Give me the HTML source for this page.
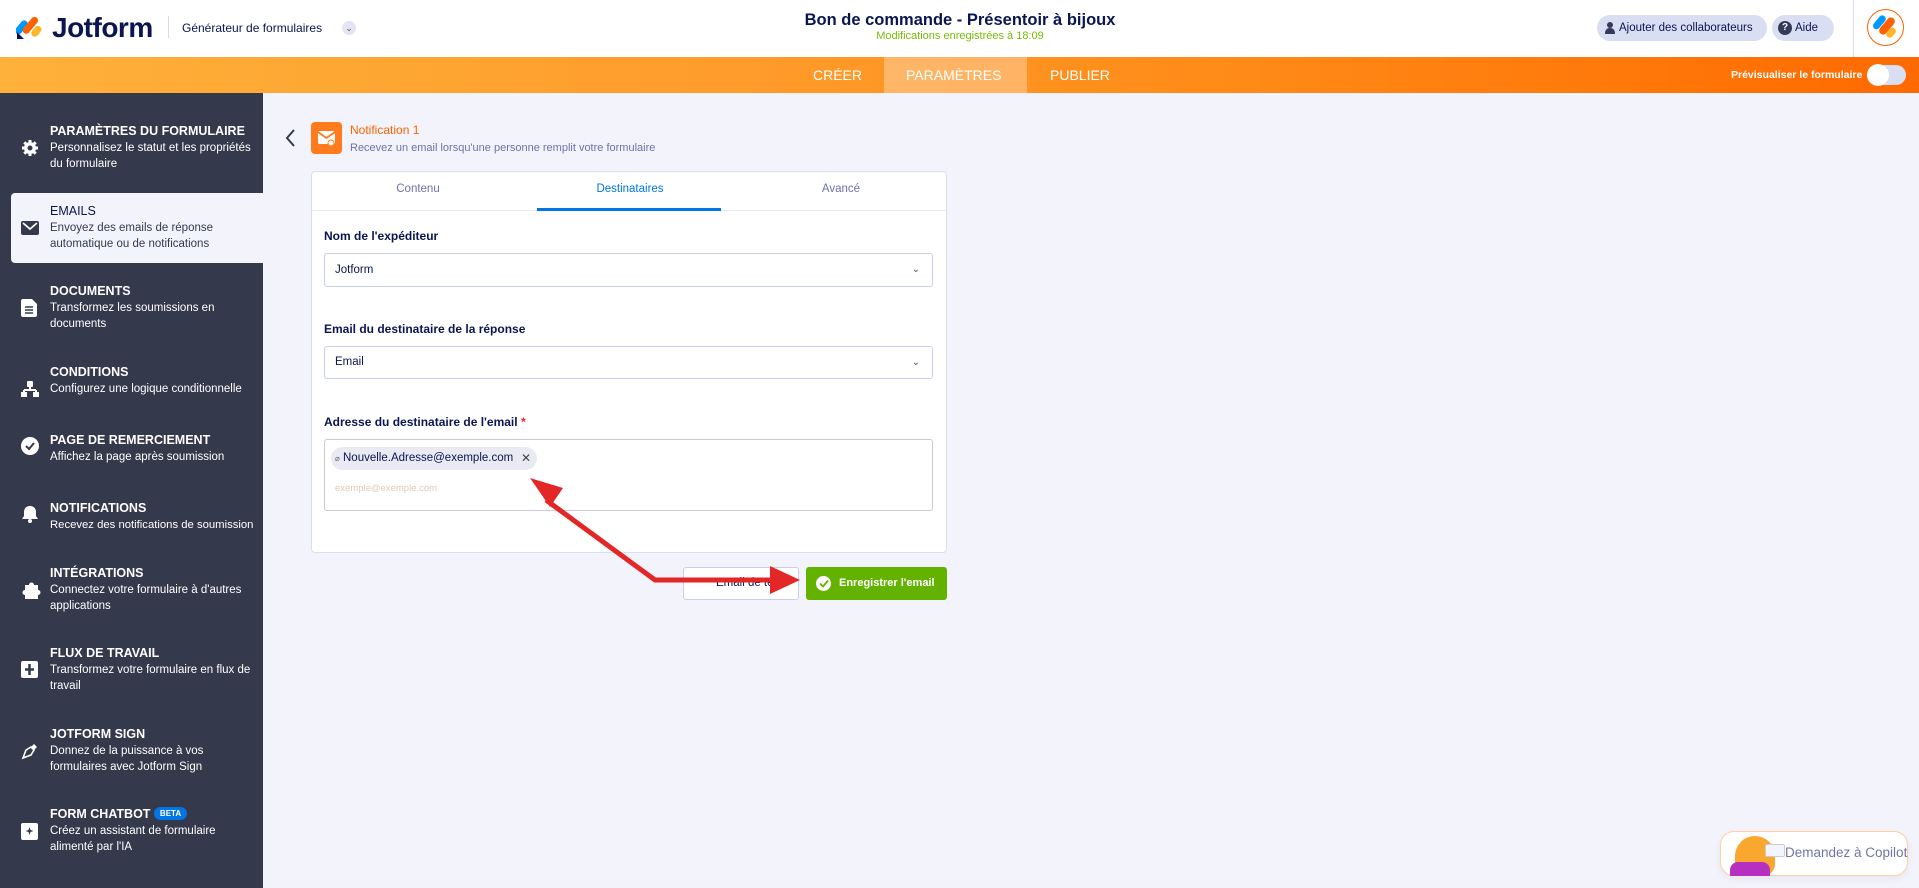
<!DOCTYPE html>
<html><head><meta charset="utf-8"><style>
*{box-sizing:border-box;margin:0;padding:0}
body{width:1919px;height:888px;overflow:hidden;font-family:"Liberation Sans",sans-serif;background:#f3f3fb;position:relative;color:#0a1551}
.abs{position:absolute}
#hdr{left:0;top:0;width:1919px;height:57px;background:#fff}
#bar{left:0;top:57px;width:1919px;height:36px;background:linear-gradient(90deg,#feb13b 0%,#ff9b2a 40%,#ff8a17 65%,#ff6a00 100%)}
#side{left:0;top:93px;width:263px;height:795px;background:#343a4c}
.item{position:absolute;left:0;width:263px;color:#fff}
.item .t{position:absolute;left:50px;font-weight:bold;font-size:12.5px;letter-spacing:0}
.item .d{position:absolute;left:50px;font-size:11.5px;line-height:16px;width:210px}
.item svg{position:absolute;left:21px}
.card{left:311px;top:171px;width:636px;height:382px;background:#fff;border:1px solid #dadef3;border-radius:4px}
.lbl{position:absolute;left:324px;font-weight:bold;font-size:12px;color:#0a1551}
.inp{position:absolute;left:324px;width:609px;background:#fff;border:1px solid #c8ceed;border-radius:3px;font-size:11.5px;color:#0a1551}
</style></head><body>
<div id="hdr" class="abs">
  <svg class="abs" style="left:16px;top:13px" width="28" height="26" viewBox="0 0 28 26">
    <rect x="2" y="6" width="7" height="16" rx="3.5" transform="rotate(40 5 14)" fill="#0099ff"/>
    <rect x="11" y="2" width="7" height="20" rx="3.5" transform="rotate(40 14 12)" fill="#ff6100"/>
    <rect x="17" y="12" width="7" height="12" rx="3.5" transform="rotate(40 20 18)" fill="#ffb629"/>
    <path d="M1 19 L1 26 L8 26 Z" fill="#0a1551"/>
  </svg>
  <div class="abs" style="left:52px;top:12px;font-size:28px;font-weight:bold;color:#0a1551;letter-spacing:-0.5px">Jotform</div>
  <div class="abs" style="left:168px;top:16px;width:1px;height:22px;background:#d8dbe8"></div>
  <div class="abs" style="left:182px;top:21px;font-size:12px;color:#0a1551">Générateur de formulaires</div>
  <div class="abs" style="left:342px;top:21px;width:14px;height:14px;border-radius:7px;background:#e3e5f3;font-size:9px;text-align:center;line-height:14px;color:#555">⌄</div>
  <div class="abs" style="left:700px;width:520px;top:11px;text-align:center;font-size:16.5px;font-weight:bold;color:#0a1551">Bon de commande - Présentoir à bijoux</div>
  <div class="abs" style="left:700px;width:520px;top:30px;text-align:center;font-size:11px;color:#78bb07">Modifications enregistrées à 18:09</div>
  <div class="abs" style="left:1597px;top:15px;width:170px;height:26px;border-radius:13px;background:#dadef3;font-size:11.5px;line-height:26px;padding-left:22px;color:#0a1551">Ajouter des collaborateurs
    <svg class="abs" style="left:8px;top:7px" width="10" height="12" viewBox="0 0 10 12"><circle cx="5" cy="3" r="3" fill="#343a5c"/><path d="M0 12 Q0 6 5 6 Q10 6 10 12Z" fill="#343a5c"/></svg></div>
  <div class="abs" style="left:1772px;top:15px;width:62px;height:26px;border-radius:13px;background:#dadef3;font-size:11.5px;line-height:26px;padding-left:23px;color:#0a1551">Aide
    <div class="abs" style="left:6px;top:6px;width:14px;height:14px;border-radius:7px;background:#343a5c;color:#fff;font-size:10px;line-height:14px;text-align:center;font-weight:bold">?</div></div>
  <div class="abs" style="left:1853px;top:0;width:1px;height:57px;background:#dadef3"></div>
  <div class="abs" style="left:1867px;top:9px;width:37px;height:37px;border-radius:50%;border:1.5px solid #ff6100;background:#fff;overflow:hidden">
    <svg width="34" height="34" viewBox="0 0 34 34"><rect x="8" y="4" width="7" height="16" rx="3.5" transform="rotate(40 11 12)" fill="#0099ff"/><rect x="15" y="6" width="8" height="20" rx="4" transform="rotate(40 19 16)" fill="#ff6100"/><rect x="20" y="17" width="7" height="11" rx="3.5" transform="rotate(40 23 22)" fill="#ffb629"/></svg></div>
</div>
<div id="bar" class="abs">
  <div class="abs" style="left:884px;top:0;width:143px;height:36px;background:rgba(255,255,255,.3)"></div>
  <div class="abs" style="left:813px;top:10px;font-size:14px;color:#fff">CRÉER</div>
  <div class="abs" style="left:906px;top:10px;font-size:14px;color:#fff">PARAMÈTRES</div>
  <div class="abs" style="left:1050px;top:10px;font-size:14px;color:#fff">PUBLIER</div>
  <div class="abs" style="left:1731px;top:12px;font-size:10.5px;color:#fff;font-weight:bold">Prévisualiser le formulaire</div>
  <div class="abs" style="left:1872px;top:8px;width:34px;height:20px;border-radius:10px;background:#dadef3"></div>
  <div class="abs" style="left:1867px;top:7px;width:22px;height:22px;border-radius:11px;background:#fff"></div>
</div>
<div id="side" class="abs">
  <div class="item" style="top:30px"><svg style="top:16px" width="18" height="18" viewBox="0 0 18 18"><circle cx="9" cy="9" r="6" fill="#fff"/><g stroke="#fff" stroke-width="3"><path d="M9 1v16M1 9h16M3.3 3.3l11.4 11.4M14.7 3.3L3.3 14.7"/></g><circle cx="9" cy="9" r="2.5" fill="#343a4c"/></svg>
    <div class="t" style="top:1px">PARAMÈTRES DU FORMULAIRE</div><div class="d" style="top:17px">Personnalisez le statut et les propriétés du formulaire</div></div>
  <div class="abs" style="left:11px;top:100px;width:252px;height:70px;background:#f3f3fb;border-radius:4px 0 0 4px"></div>
  <div class="item" style="top:110px;color:#343a4c"><svg style="top:18px" width="18" height="14" viewBox="0 0 18 14"><rect width="18" height="14" rx="2" fill="#343a4c"/><path d="M2 2l7 6 7-6" stroke="#fff" stroke-width="1.8" fill="none"/></svg>
    <div class="t" style="top:1px;font-weight:normal;color:#0a1551">EMAILS</div><div class="d" style="top:17px;color:#343a4c">Envoyez des emails de réponse automatique ou de notifications</div></div>
  <div class="item" style="top:190px"><svg style="top:16px" width="16" height="18" viewBox="0 0 16 18"><path d="M2 0h9l5 5v11a2 2 0 01-2 2H2a2 2 0 01-2-2V2a2 2 0 012-2z" fill="#fff"/><path d="M4 8h8M4 11h8M4 14h8" stroke="#343a4c" stroke-width="1.5"/></svg>
    <div class="t" style="top:1px">DOCUMENTS</div><div class="d" style="top:17px">Transformez les soumissions en documents</div></div>
  <div class="item" style="top:271px"><svg style="top:17px" width="18" height="16" viewBox="0 0 18 16"><rect x="6" y="0" width="6" height="6" rx="1" fill="#fff"/><path d="M9 6v3M3 9h12M3 9v3M15 9v3" stroke="#fff" stroke-width="2"/><rect x="0" y="11" width="6" height="5" fill="#fff"/><rect x="12" y="11" width="6" height="5" fill="#fff"/></svg>
    <div class="t" style="top:1px">CONDITIONS</div><div class="d" style="top:17px">Configurez une logique conditionnelle</div></div>
  <div class="item" style="top:339px"><svg style="top:5px" width="18" height="18" viewBox="0 0 18 18"><circle cx="9" cy="9" r="9" fill="#fff"/><path d="M5 9l3 3 5-6" stroke="#343a4c" stroke-width="2" fill="none"/></svg>
    <div class="t" style="top:1px">PAGE DE REMERCIEMENT</div><div class="d" style="top:17px">Affichez la page après soumission</div></div>
  <div class="item" style="top:407px"><svg style="top:5px" width="18" height="18" viewBox="0 0 18 18"><path d="M9 1c-4 0-6 3-6 6v4l-2 3h16l-2-3V7c0-3-2-6-6-6z" fill="#fff"/><circle cx="9" cy="16" r="2" fill="#fff"/></svg>
    <div class="t" style="top:1px">NOTIFICATIONS</div><div class="d" style="top:17px;width:220px;font-size:11.3px">Recevez des notifications de soumission</div></div>
  <div class="item" style="top:472px"><svg style="top:16px" width="20" height="18" viewBox="0 0 20 18"><path d="M4 4h4a2.5 2.5 0 115 0h4v5a2.5 2.5 0 110 5v4H4v-4a2.5 2.5 0 110-5z" fill="#fff"/></svg>
    <div class="t" style="top:1px">INTÉGRATIONS</div><div class="d" style="top:17px">Connectez votre formulaire à d'autres applications</div></div>
  <div class="item" style="top:552px"><svg style="top:16px" width="17" height="17" viewBox="0 0 17 17"><rect width="17" height="17" rx="2" fill="#fff"/><path d="M8.5 3v11M4 8.5h9" stroke="#343a4c" stroke-width="2.5"/></svg>
    <div class="t" style="top:1px">FLUX DE TRAVAIL</div><div class="d" style="top:17px">Transformez votre formulaire en flux de travail</div></div>
  <div class="item" style="top:633px"><svg style="top:16px" width="18" height="18" viewBox="0 0 18 18"><path d="M2 16l3-8 5-3 3 3-3 5-8 3z" fill="none" stroke="#fff" stroke-width="1.6"/><path d="M10 5l3-3 3 3-3 3" fill="#fff"/></svg>
    <div class="t" style="top:1px">JOTFORM SIGN</div><div class="d" style="top:17px">Donnez de la puissance à vos formulaires avec Jotform Sign</div></div>
  <div class="item" style="top:713px"><svg style="top:17px" width="17" height="17" viewBox="0 0 17 17"><rect width="17" height="17" rx="2" fill="#fff"/><path d="M8.5 4l1 3 3 1-3 1-1 3-1-3-3-1 3-1z" fill="#343a4c"/></svg>
    <div class="t" style="top:1px">FORM CHATBOT <span style="display:inline-block;background:#0075e3;border-radius:7px;font-size:8px;padding:2px 6px;vertical-align:2px">BETA</span></div><div class="d" style="top:17px">Créez un assistant de formulaire alimenté par l'IA</div></div>
</div>

<svg class="abs" style="left:284px;top:128px" width="12" height="20" viewBox="0 0 12 20"><path d="M10 2L3 10l7 8" stroke="#343a4c" stroke-width="2" fill="none"/></svg>
<div class="abs" style="left:311px;top:122px;width:31px;height:32px;border-radius:4px;background:#ff7b1c"></div>
<svg class="abs" style="left:317px;top:130px" width="20" height="17" viewBox="0 0 20 17"><rect x="1" y="1" width="17" height="13" rx="1.5" fill="#fff"/><path d="M1 2l8.5 6L18 2" stroke="#ff7b1c" stroke-width="1.8" fill="none"/><circle cx="14" cy="13" r="3" fill="#fff" stroke="#ff7b1c"/></svg>
<div class="abs" style="left:350px;top:123px;font-size:12px;color:#ff6100">Notification 1</div>
<div class="abs" style="left:350px;top:142px;font-size:11px;color:#6c73a8">Recevez un email lorsqu'une personne remplit votre formulaire</div>

<div class="card abs">
  <div class="abs" style="left:0;top:38px;width:634px;height:1px;background:#e6e8f4"></div>
  <div class="abs" style="left:0;top:11px;width:212px;text-align:center;font-size:11.5px;color:#6c73a8">Contenu</div>
  <div class="abs" style="left:212px;top:11px;width:212px;text-align:center;font-size:11.5px;color:#0075e3">Destinataires</div>
  <div class="abs" style="left:424px;top:11px;width:210px;text-align:center;font-size:11.5px;color:#6c73a8">Avancé</div>
  <div class="abs" style="left:225px;top:36px;width:184px;height:3px;background:#0075e3"></div>
</div>
<div class="lbl" style="top:229px">Nom de l'expéditeur</div>
<div class="inp" style="top:253px;height:34px;line-height:32px;padding-left:10px">Jotform<span style="position:absolute;right:12px;font-size:10px;color:#555">⌄</span></div>
<div class="lbl" style="top:322px">Email du destinataire de la réponse</div>
<div class="inp" style="top:346px;height:33px;line-height:31px;padding-left:10px">Email<span style="position:absolute;right:12px;font-size:10px;color:#555">⌄</span></div>
<div class="lbl" style="top:415px">Adresse du destinataire de l'email <span style="color:#e22">*</span></div>
<div class="inp" style="top:439px;height:72px;border-color:#c9c9cf">
  <div class="abs" style="left:6px;top:7px;width:206px;height:23px;border-radius:12px;background:#e9eaf2;font-size:11.5px;line-height:23px;padding-left:12px;color:#0a1551;white-space:nowrap"><span style="position:absolute;left:4px;font-size:8px;color:#666">⌀</span>Nouvelle.Adresse@exemple.com<span style="position:absolute;right:6px;font-size:12px;color:#444">✕</span></div>
  <div class="abs" style="left:10px;top:43px;font-size:9.5px;color:#e3c9b6">exemple@exemple.com</div>
</div>

<div class="abs" style="left:683px;top:567px;width:116px;height:33px;background:#fff;border:1px solid #c8ceed;border-radius:3px;font-size:11.5px;line-height:31px;padding-left:32px;color:#0a1551">Email de test</div>
<div class="abs" style="left:806px;top:567px;width:141px;height:33px;background:#64b200;border-radius:3px;font-size:11px;line-height:33px;padding-left:33px;color:#fff;font-weight:bold">Enregistrer l'email
  <div class="abs" style="left:10px;top:9px;width:15px;height:15px;border-radius:8px;background:#fff"></div>
  <svg class="abs" style="left:13px;top:12px" width="10" height="9" viewBox="0 0 10 9"><path d="M1 4.5l3 3 5-6" stroke="#64b200" stroke-width="1.8" fill="none"/></svg></div>

<svg class="abs" style="left:0;top:0" width="1919" height="888" viewBox="0 0 1919 888">
  <path d="M546 500 L655 580 L775 580" stroke="#e32626" stroke-width="5" fill="none"/>
  <polygon points="530,478 563,488 550,507" fill="#e32626"/>
  <polygon points="770,566 800,580 770,594" fill="#e32626"/>
</svg>

<div class="abs" style="left:1720px;top:831px;width:188px;height:45px;background:#fff;border:1px solid #ffcfa8;border-radius:14px;box-shadow:0 3px 8px rgba(0,0,0,.06)"></div>
<div class="abs" style="left:1735px;top:836px;width:40px;height:40px;border-radius:50% 50% 30% 30%;background:#f9a72e"></div>
<div class="abs" style="left:1730px;top:862px;width:40px;height:14px;border-radius:8px 8px 0 0;background:#b62fc0"></div>
<div class="abs" style="left:1765px;top:844px;width:20px;height:13px;background:#f3f4ff;border:1px solid #ccc;border-radius:2px"></div>
<div class="abs" style="left:1785px;top:845px;font-size:13.5px;color:#6f76a7;white-space:nowrap;width:123px;overflow:hidden">Demandez à Copilot</div>
</body></html>
